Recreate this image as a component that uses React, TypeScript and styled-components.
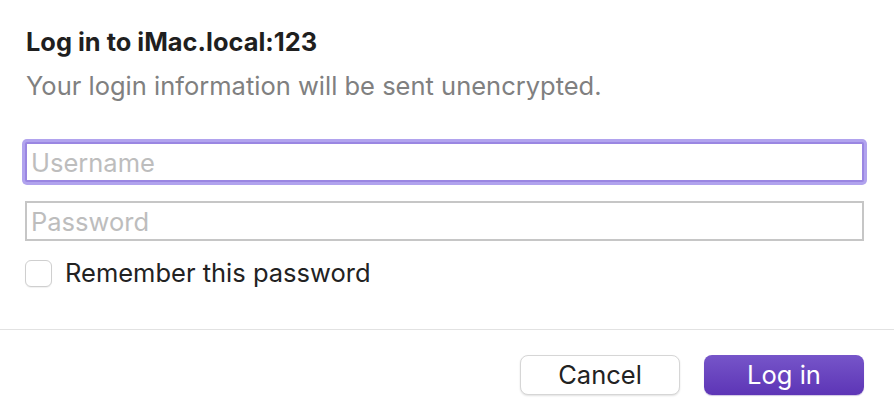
import React from 'react';
import styled, { createGlobalStyle, css } from 'styled-components';

const GlobalStyle = createGlobalStyle`
  html, body {
    margin: 0;
    padding: 0;
    background: #ffffff;
  }
  body {
    font-family: Inter, "Noto Sans", "Liberation Sans", sans-serif;
    -webkit-font-smoothing: antialiased;
  }
`;

const Dialog = styled.div`
  width: 894px;
  height: 412px;
  background: #ffffff;
  display: flex;
  flex-direction: column;
  box-sizing: border-box;
`;

const Body = styled.div`
  display: flex;
  flex-direction: column;
  padding: 27px 30px 0 25px;
  height: 329px;
  box-sizing: border-box;
`;

const Title = styled.h1`
  margin: 0 0 0 1px;
  font-size: 25.4px;
  line-height: 30px;
  font-weight: 700;
  color: #1f1f1f;
`;

const Subtitle = styled.p`
  margin: 14px 0 0 1px;
  font-size: 25.5px;
  line-height: 30px;
  font-weight: 400;
  color: #808080;
`;

const Fields = styled.div`
  display: flex;
  flex-direction: column;
  gap: 19px;
  margin-top: 41px;
`;

const TextField = styled.input<{ $focused?: boolean }>`
  box-sizing: border-box;
  width: 839px;
  height: 40px;
  padding: 0 4px;
  font-family: inherit;
  font-size: 25.5px;
  color: #1f1f1f;
  background: #ffffff;
  border: 2px solid #c6c6c6;
  border-radius: 0;
  outline: none;

  &::placeholder {
    color: #bdbdbd;
  }

  ${({ $focused }) =>
    $focused &&
    css`
      border-color: #9a86e2;
      border-radius: 2px;
      box-shadow: 0 0 0 3px #b1a3ee;
    `}
`;

const CheckRow = styled.label`
  display: flex;
  align-items: center;
  gap: 13px;
  margin-top: 17px;
  font-size: 25.5px;
  line-height: 30px;
  color: #222222;
  cursor: default;
`;

const CheckBox = styled.span`
  width: 27px;
  height: 27px;
  box-sizing: border-box;
  border: 1px solid #cfcfcf;
  border-radius: 6px;
  background: #ffffff;
  box-shadow: 0 1px 1px rgba(0, 0, 0, 0.06);
`;

const Divider = styled.div`
  height: 1px;
  background: #e2e2e2;
`;

const Footer = styled.div`
  display: flex;
  justify-content: flex-end;
  align-items: center;
  gap: 24px;
  padding: 25px 30px 0 0;
`;

const Button = styled.button<{ $primary?: boolean }>`
  width: 160px;
  height: 40px;
  box-sizing: border-box;
  border-radius: 8px;
  font-family: inherit;
  font-size: 25.5px;
  line-height: 1;
  cursor: pointer;

  ${({ $primary }) =>
    $primary
      ? css`
          color: #ffffff;
          border: none;
          background: linear-gradient(180deg, #7655c9 0%, #5d35b6 100%);
          box-shadow: 0 1px 1px rgba(60, 20, 140, 0.25);
        `
      : css`
          color: #222222;
          border: 1px solid #d6d6d6;
          background: #ffffff;
          box-shadow: 0 1px 2px rgba(0, 0, 0, 0.12);
        `}
`;

const App: React.FC = () => {
  return (
    <>
      <GlobalStyle />
      <Dialog>
        <Body>
          <Title>Log in to iMac.local:123</Title>
          <Subtitle>Your login information will be sent unencrypted.</Subtitle>
          <Fields>
            <TextField $focused placeholder="Username" />
            <TextField type="password" placeholder="Password" />
          </Fields>
          <CheckRow>
            <CheckBox />
            Remember this password
          </CheckRow>
        </Body>
        <Divider />
        <Footer>
          <Button>Cancel</Button>
          <Button $primary>Log in</Button>
        </Footer>
      </Dialog>
    </>
  );
};

export default App;
